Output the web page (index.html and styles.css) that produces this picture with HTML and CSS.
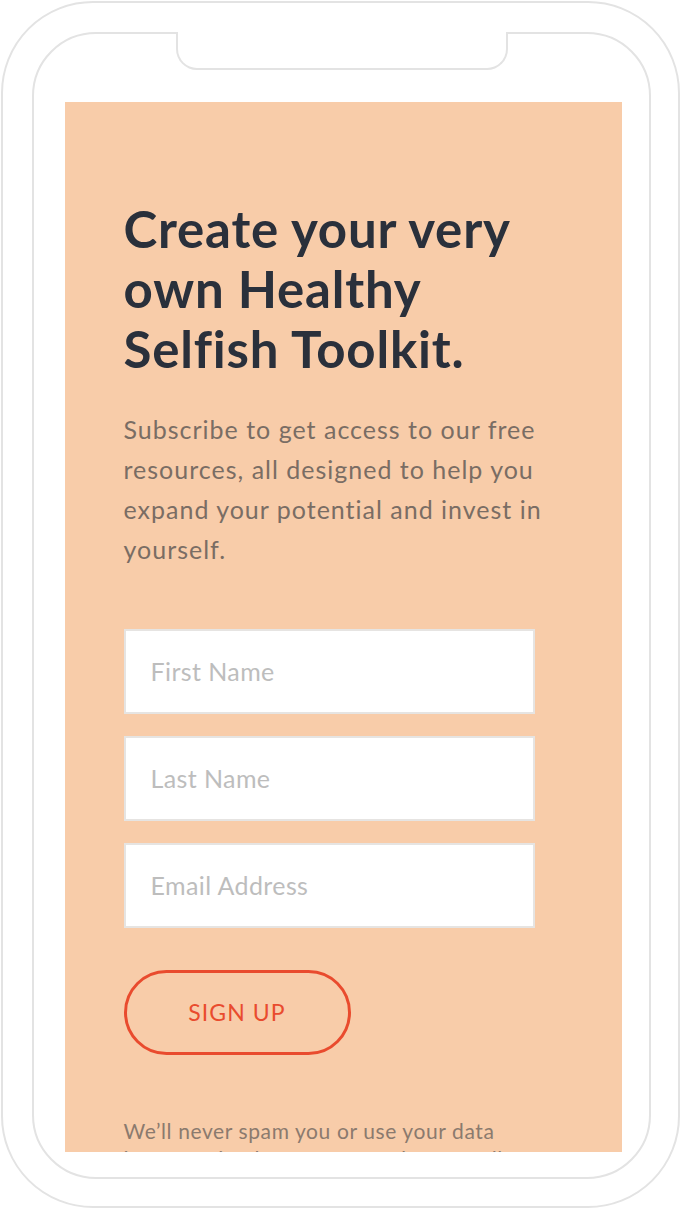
FILE: index.html
```html
<!DOCTYPE html>
<html lang="en">
<head>
<meta charset="utf-8">
<title>Healthy Selfish Toolkit</title>
<link rel="stylesheet" href="styles.css">
</head>
<body>
<div class="phone">
  <div class="screen">
    <div class="notch"></div>
    <section class="signup">
      <h1 class="title">Create your very own Healthy Selfish Toolkit.</h1>
      <p class="lead">Subscribe to get access to our free resources, all designed to help you expand your potential and invest in yourself.</p>
      <form class="form">
        <input class="field" type="text" placeholder="First Name">
        <input class="field" type="text" placeholder="Last Name">
        <input class="field" type="email" placeholder="Email Address">
        <button class="btn" type="button">SIGN UP</button>
      </form>
      <p class="note">We’ll never spam you or use your data inappropriately. You can read our email terms here.</p>
    </section>
  </div>
</div>
</body>
</html>
```

FILE: styles.css
```css
* { box-sizing: border-box; }

html, body {
  margin: 0;
  padding: 0;
  background: #ffffff;
}

body {
  font-family: "Lato", "Noto Sans", sans-serif;
  width: 680px;
  height: 1208px;
  overflow: hidden;
}

.phone {
  width: 679px;
  height: 1207px;
  margin: 0.5px;
  border: 2px solid #e3e3e3;
  border-radius: 92px;
  padding: 29px 0 0 29px;
}

.screen {
  position: relative;
  width: 619px;
  height: 1147px;
  border: 2px solid #e3e3e3;
  border-radius: 64px;
  padding: 68px 0 0 31px;
}

.notch {
  position: absolute;
  top: -2px;
  left: 142px;
  width: 332px;
  height: 38px;
  background: #ffffff;
  border: 2px solid #e3e3e3;
  border-top: none;
  border-radius: 0 0 21px 21px;
}

.signup {
  width: 557px;
  height: 1050px;
  overflow: hidden;
  background: #f8cca9;
  padding: 97px 0 0 59px;
}

.title {
  margin: 0;
  width: 430px;
  font-size: 51px;
  line-height: 60px;
  font-weight: 700;
  color: #2a303b;
  letter-spacing: 0.8px;
}

.lead {
  margin: 30px 0 0;
  width: 440px;
  font-size: 25px;
  line-height: 40px;
  color: #7a6d64;
  letter-spacing: 1px;
}

.form {
  margin-top: 60px;
  display: flex;
  flex-direction: column;
  align-items: flex-start;
  gap: 22px;
  width: 411px;
}

.field {
  display: block;
  width: 411px;
  height: 85px;
  margin: 0;
  border: 2px solid #e6e4e2;
  background: #ffffff;
  padding: 0 0 0 25px;
  font-family: inherit;
  font-size: 25px;
  letter-spacing: 0.4px;
  color: #333;
  outline: none;
  border-radius: 0;
}

.field::placeholder {
  color: #bdbdbd;
}

.btn {
  margin-top: 20px;
  width: 227px;
  height: 85px;
  border: 3px solid #e94b2e;
  border-radius: 43px;
  background: transparent;
  color: #e94b2e;
  font-family: inherit;
  font-size: 23px;
  letter-spacing: 1.1px;
  padding: 0;
  cursor: pointer;
}

.note {
  margin: 62px 0 0;
  width: 420px;
  font-size: 21px;
  line-height: 28px;
  letter-spacing: 0.6px;
  color: #8b7a6e;
}
```
